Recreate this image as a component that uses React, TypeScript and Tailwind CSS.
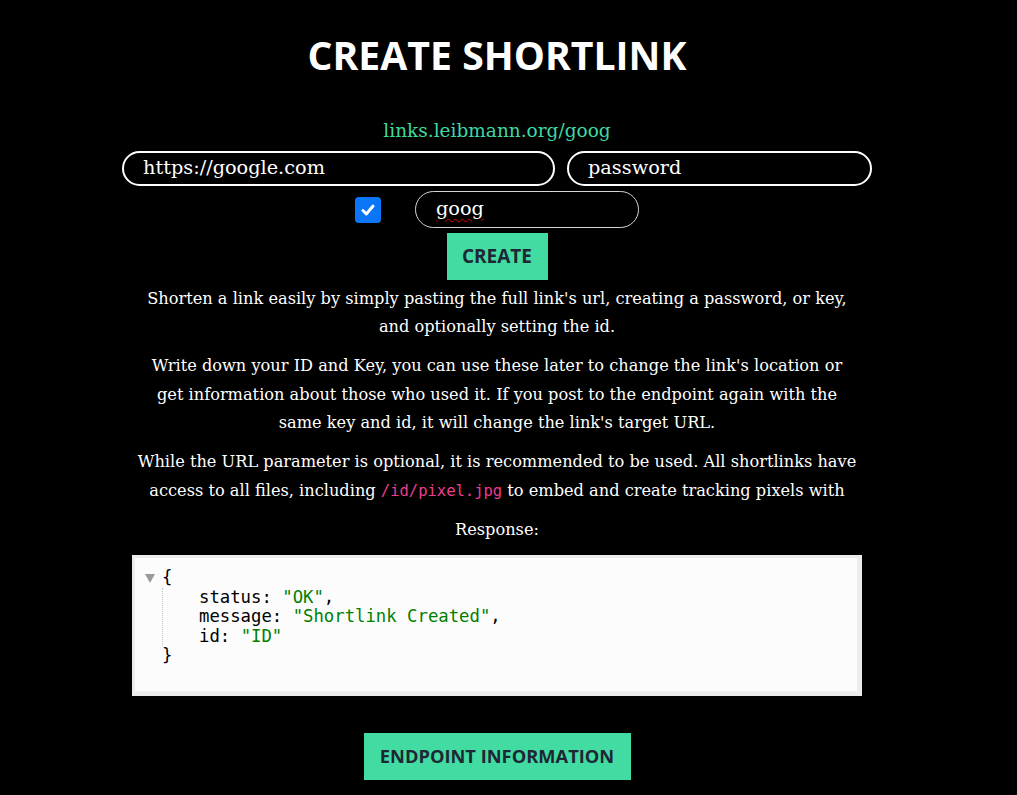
import React from "react";

const SERIF = { fontFamily: '"DejaVu Serif", "Liberation Serif", serif' };
const HEAD = { fontFamily: '"Open Sans", "Liberation Sans", sans-serif' };
const MONO = { fontFamily: '"DejaVu Sans Mono", "Liberation Mono", monospace' };

function Paragraph({ children }: { children: React.ReactNode }) {
  return <p className="mx-auto mt-[10.5px] max-w-[760px] text-center text-[16.2px] leading-[28.5px] text-white">{children}</p>;
}

export default function App() {
  return (
    <div className="min-h-[795px] bg-black pr-[23px] text-white" style={SERIF}>
      <div className="flex flex-col items-center">
        <h1 className="mt-[29px] text-[39.2px] font-bold leading-[52px] text-white" style={HEAD}>
          CREATE SHORTLINK
        </h1>

        <p className="mt-[38px] text-[18.5px] leading-[24px] text-[#3fd9a0]">links.leibmann.org/goog</p>

        <div className="mt-[8px] flex gap-[12px]">
          <div className="flex h-[35px] w-[433px] items-center rounded-full border-2 border-white px-[19px] text-[19.3px]">
            https://google.com
          </div>
          <div className="flex h-[35px] w-[305px] items-center rounded-full border-2 border-white px-[19px] text-[19.3px]">
            password
          </div>
        </div>

        <div className="mt-[5px] flex items-center gap-[34px]">
          <span className="grid h-[26px] w-[26px] place-items-center rounded-[4px] bg-[#0b75f7]">
            <svg viewBox="0 0 16 16" className="h-[18px] w-[18px]" fill="none" stroke="white" strokeWidth="2.6" strokeLinecap="round" strokeLinejoin="round">
              <path d="M3.5 8.5l3 3 6-7" />
            </svg>
          </span>
          <div className="flex h-[37px] w-[224px] items-center rounded-full border border-gray-300 px-[20px] text-[19.3px]">
            <span className="underline decoration-red-600 decoration-wavy decoration-1 underline-offset-[3px]">goog</span>
          </div>
        </div>

        <button className="mt-[5px] h-[47px] w-[101px] bg-[#42dca3] text-[19px] font-bold text-[#1e2733]" style={HEAD}>
          CREATE
        </button>

        <div className="-mt-[6px]">
          <Paragraph>
            Shorten a link easily by simply pasting the full link's url, creating a password, or key,
            <br />
            and optionally setting the id.
          </Paragraph>
          <Paragraph>
            Write down your ID and Key, you can use these later to change the link's location or
            <br />
            get information about those who used it. If you post to the endpoint again with the
            <br />
            same key and id, it will change the link's target URL.
          </Paragraph>
          <Paragraph>
            While the URL parameter is optional, it is recommended to be used. All shortlinks have
            <br />
            access to all files, including{" "}
            <code className="text-[15.5px] text-[#e83e8c]" style={MONO}>
              /id/pixel.jpg
            </code>{" "}
            to embed and create tracking pixels with
          </Paragraph>
          <Paragraph>Response:</Paragraph>
        </div>

        <div className="mt-[11px] w-[730px] border-b-[5px] border-l-[3px] border-r-[5px] border-t-[3px] border-[#ececec] bg-[#fcfcfc] pb-[25px] pl-[10px] pt-[10px] text-[17.3px] leading-[19.5px] text-black" style={MONO}>
          <div className="flex items-start">
            <svg viewBox="0 0 10 9" className="mr-[7px] mt-[6px] h-[9px] w-[10px] shrink-0" fill="#9a9a9a">
              <path d="M0 0h10L5 9z" />
            </svg>
            <div>
              <div>{"{"}</div>
              <div className="border-l border-dotted border-[#c8c8c8] pl-[36px]">
                <div>
                  status: <span className="text-[#008000]">"OK"</span>,
                </div>
                <div>
                  message: <span className="text-[#008000]">"Shortlink Created"</span>,
                </div>
                <div>
                  id: <span className="text-[#008000]">"ID"</span>
                </div>
              </div>
              <div>{"}"}</div>
            </div>
          </div>
        </div>

        <button className="mt-[37px] h-[47px] w-[267px] bg-[#42dca3] text-[18.3px] font-bold text-[#1e2733]" style={HEAD}>
          ENDPOINT INFORMATION
        </button>
      </div>
    </div>
  );
}
